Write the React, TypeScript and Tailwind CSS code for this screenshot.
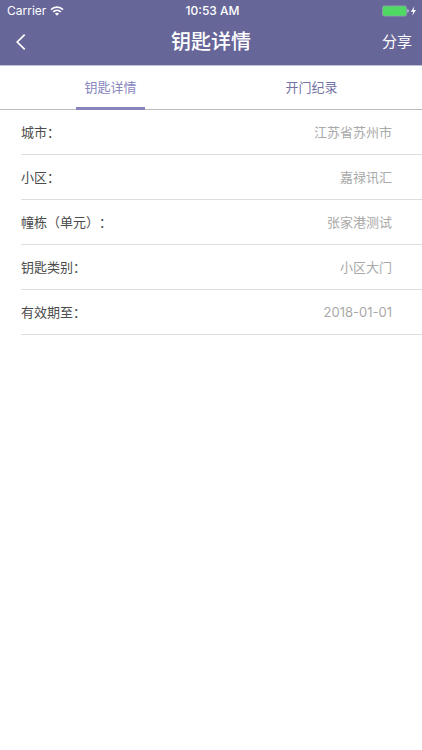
import React, { useState } from "react";

type Detail = { label: string; value: string };

const details: Detail[] = [
  { label: "城市：", value: "江苏省苏州市" },
  { label: "小区：", value: "嘉禄讯汇" },
  { label: "幢栋（单元）：", value: "张家港测试" },
  { label: "钥匙类别：", value: "小区大门" },
  { label: "有效期至：", value: "2018-01-01" },
];

const tabs = ["钥匙详情", "开门纪录"];

function StatusBar() {
  return (
    <div className="grid h-[22px] grid-cols-3 items-center pl-[7px] pr-1 text-[12px] leading-4">
      <div className="flex items-center gap-1">
        <span>Carrier</span>
        <svg width="14" height="10" viewBox="0 0 14 10" fill="none" stroke="currentColor" strokeWidth="1.7" aria-hidden="true">
          <path d="M1 3.6C4.4 0.2 9.6 0.2 13 3.6" />
          <path d="M3.2 5.9C5.4 3.8 8.6 3.8 10.8 5.9" />
          <path d="M4.9 7.6C6.1 6.5 7.9 6.5 9.1 7.6L7 9.8Z" fill="currentColor" stroke="none" />
        </svg>
      </div>
      <span className="text-center font-medium">10:53 AM</span>
      <svg className="justify-self-end" width="36" height="12" viewBox="0 0 36 12" aria-hidden="true">
        <rect x="0.5" y="0.9" width="24" height="10.2" rx="1.8" fill="#4fd964" stroke="#8f9fae" strokeWidth="0.8" />
        <path d="M25.4 4.1C27.2 4.5 27.2 7.5 25.4 7.9Z" fill="#c9c8e0" />
        <path d="M32.4 1.2L28.8 6.7H31.2L30.2 10.8L34 5.1H31.5Z" fill="white" />
      </svg>
    </div>
  );
}

export default function App() {
  const [active, setActive] = useState(0);

  return (
    <div className="min-h-screen bg-white font-[Inter,'Noto_Sans_CJK_SC',sans-serif] text-[13px] leading-5 [text-spacing-trim:space-all]">
      <header className="h-[66px] border-b border-[#c3c2da] bg-[#676699] text-white">
        <StatusBar />
        <div className="grid h-10 grid-cols-[1fr_auto_1fr] items-center px-[10px]">
          <button type="button" aria-label="返回" className="justify-self-start pl-[6px]">
            <svg width="10" height="16" viewBox="0 0 10 16" fill="none" stroke="currentColor" strokeWidth="1.7" aria-hidden="true">
              <path d="M8.7 0.7L1.2 8L8.7 15.3" />
            </svg>
          </button>
          <h1 className="text-[20px] font-medium leading-7">钥匙详情</h1>
          <button type="button" className="justify-self-end text-[15px]">分享</button>
        </div>
      </header>

      <nav className="flex h-[44px] px-[10px] shadow-[inset_0_-1px_0_#bcbcbc]">
        {tabs.map((tab, index) => (
          <button
            key={tab}
            type="button"
            onClick={() => setActive(index)}
            className="flex flex-1 justify-center"
          >
            <span
              className={
                index === active
                  ? "flex h-full w-[69px] items-center justify-center border-b-[3px] border-[#8784bd] pt-px text-[#8886bd]"
                  : "flex h-full w-[69px] items-center justify-center border-b-[3px] border-transparent pt-px text-[#7473a6]"
              }
            >
              {tab}
            </span>
          </button>
        ))}
      </nav>

      <dl className="pl-[21px]">
        {details.map((item) => (
          <div key={item.label} className="flex h-[45px] items-center justify-between border-b border-[#dedede] pr-[30px]">
            <dt className="text-[#4c4c4c]">{item.label}</dt>
            <dd className="text-[#a9a9a9]">{item.value}</dd>
          </div>
        ))}
      </dl>
    </div>
  );
}
